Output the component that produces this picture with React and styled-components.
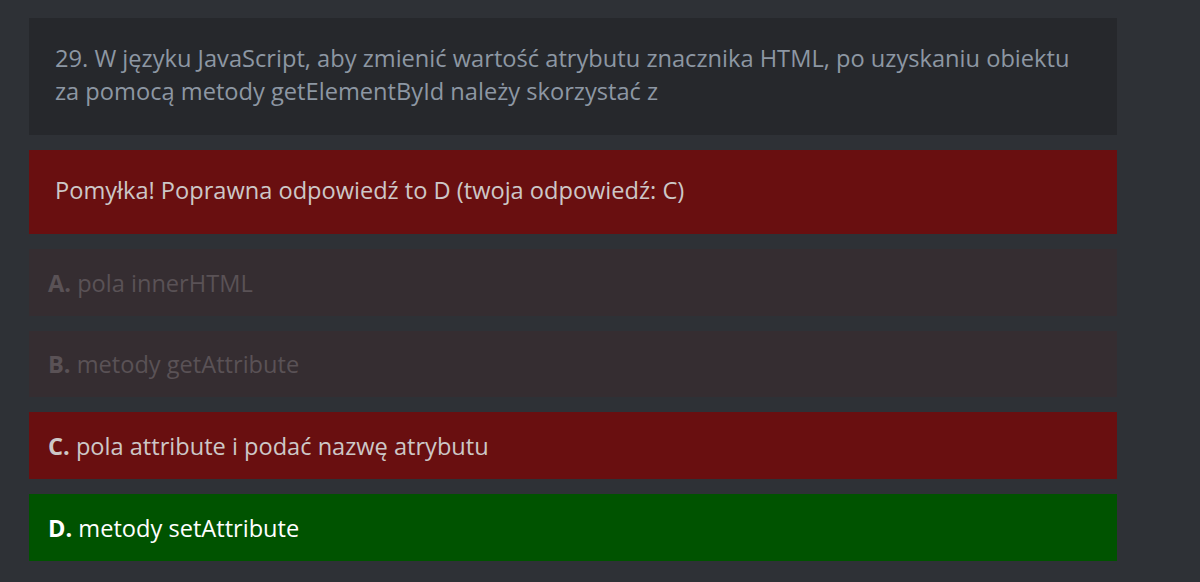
import React from "react";
import styled, { createGlobalStyle } from "styled-components";

const Global = createGlobalStyle`
  html, body { margin: 0; padding: 0; background: #2e3136; }
  body { font-family: "Open Sans", "Noto Sans", sans-serif; }
`;

const Page = styled.div`
  box-sizing: border-box;
  width: 1200px;
  padding: 18px 83px 21px 29px;
  display: flex;
  flex-direction: column;
  gap: 15px;
`;

const Question = styled.div`
  background: #26282c;
  color: #8d97a3;
  font-size: 23.65px;
  line-height: 33px;
  padding: 24px 26px 27px;
`;

const Verdict = styled.div`
  background: #690f10;
  color: #cdc7c7;
  font-size: 23.6px;
  line-height: 32px;
  padding: 24px 26px 28px;
`;

const tones = {
  neutral: { bg: "#352d31", fg: "#5a5256" },
  wrong: { bg: "#690f10", fg: "#cdc7c7" },
  right: { bg: "#005300", fg: "#ffffff" },
};

const Option = styled.div`
  background: ${(p) => tones[p.$tone].bg};
  color: ${(p) => tones[p.$tone].fg};
  font-size: 23.6px;
  line-height: 32px;
  height: ${(p) => p.$h}px;
  box-sizing: border-box;
  padding: 0 19px;
  display: flex;
  align-items: center;
  white-space: pre;
`;

const Letter = styled.b`
  font-weight: 700;
`;

const options = [
  { l: "A.", t: "pola innerHTML", tone: "neutral", h: 67 },
  { l: "B.", t: "metody getAttribute", tone: "neutral", h: 66 },
  { l: "C.", t: "pola attribute i podać nazwę atrybutu", tone: "wrong", h: 67 },
  { l: "D.", t: "metody setAttribute", tone: "right", h: 67 },
];

export default function App() {
  return (
    <>
      <Global />
      <Page>
        <Question>
          29. W języku JavaScript, aby zmienić wartość atrybutu znacznika HTML, po uzyskaniu obiektu za pomocą metody getElementById należy skorzystać z
        </Question>
        <Verdict>Pomyłka! Poprawna odpowiedź to D (twoja odpowiedź: C)</Verdict>
        {options.map((o) => (
          <Option key={o.l} $tone={o.tone} $h={o.h}>
            <span>
              <Letter>{o.l}</Letter> {o.t}
            </span>
          </Option>
        ))}
      </Page>
    </>
  );
}
